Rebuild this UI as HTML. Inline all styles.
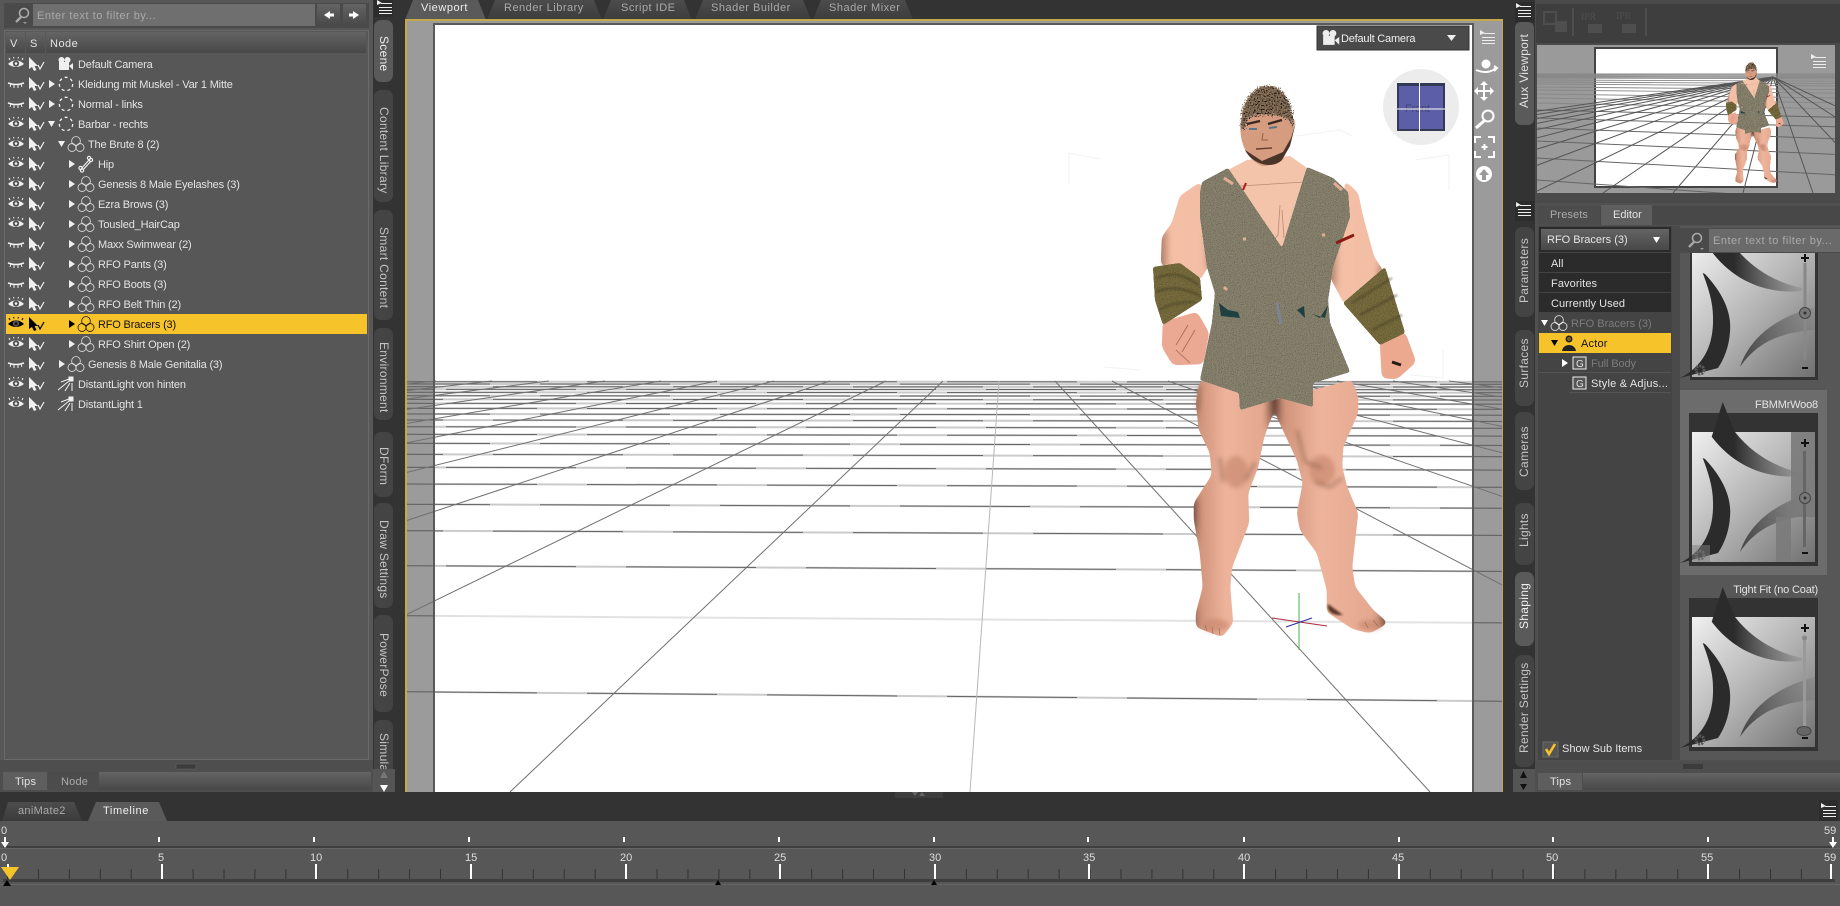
<!DOCTYPE html>
<html><head><meta charset="utf-8"><style>
html,body{margin:0;padding:0;background:#333;overflow:hidden}
svg{display:block}
text{font-family:"Liberation Sans",sans-serif;font-size:11px;fill:#e4e4e4;letter-spacing:-.18px}
.d{fill:#aaa}.dd{fill:#7c7c7c}.t{font-size:12px;letter-spacing:.3px;fill:#c4c4c4}
.w{fill:#eee}.tl{font-size:11px;letter-spacing:0;fill:#ddd}
</style></head><body>
<svg xmlns="http://www.w3.org/2000/svg" width="1840" height="906" viewBox="0 0 1840 906">
<defs>
<linearGradient id="hd" x1="0" y1="0" x2="0" y2="1"><stop offset="0" stop-color="#646464"/><stop offset="1" stop-color="#484848"/></linearGradient>
<linearGradient id="tabg" x1="0" y1="0" x2="0" y2="1"><stop offset="0" stop-color="#4c4c4c"/><stop offset="1" stop-color="#3c3c3c"/></linearGradient>
<linearGradient id="leg" x1="0" y1="0" x2="1" y2="0"><stop offset="0" stop-color="#4a2c24"/><stop offset=".07" stop-color="#cf9379"/><stop offset=".4" stop-color="#eeb49c"/><stop offset=".88" stop-color="#e3a78e"/><stop offset="1" stop-color="#553328"/></linearGradient>
<linearGradient id="arm" x1="0" y1="0" x2="1" y2="0"><stop offset="0" stop-color="#a06c58"/><stop offset=".18" stop-color="#f4c0a6"/><stop offset=".85" stop-color="#f2bda4"/><stop offset="1" stop-color="#8a5a48"/></linearGradient>
<linearGradient id="pbg" x1="0" y1="0" x2="1" y2="1"><stop offset="0" stop-color="#f0f0f0"/><stop offset=".5" stop-color="#b4b4b4"/><stop offset="1" stop-color="#707070"/></linearGradient>
<linearGradient id="sw1" gradientUnits="userSpaceOnUse" x1="42" y1="0" x2="112" y2="0"><stop offset="0" stop-color="#2b2b2b"/><stop offset="1" stop-color="#2b2b2b" stop-opacity=".05"/></linearGradient>
<linearGradient id="sw2" gradientUnits="userSpaceOnUse" x1="48" y1="0" x2="123" y2="0"><stop offset="0" stop-color="#444"/><stop offset="1" stop-color="#555" stop-opacity=".12"/></linearGradient>
<filter id="cloth" x="-5%" y="-5%" width="110%" height="110%"><feGaussianBlur in="SourceGraphic" stdDeviation="1.4"/><feComponentTransfer result="s"><feFuncA type="linear" slope="14" intercept="-6"/></feComponentTransfer><feTurbulence type="fractalNoise" baseFrequency="1.1" numOctaves="2" seed="3"/><feColorMatrix values=".9 .9 0 0 -.05 .9 .9 0 0 -.05 .9 .9 0 0 -.05 0 0 0 0 1"/><feComposite in2="s" operator="in"/><feBlend in2="s" mode="multiply"/></filter>
<filter id="goo" x="-10%" y="-10%" width="120%" height="120%"><feGaussianBlur in="SourceGraphic" stdDeviation="3"/><feComponentTransfer><feFuncA type="linear" slope="14" intercept="-6"/></feComponentTransfer></filter>
<filter id="hair" x="-15%" y="-25%" width="130%" height="150%"><feTurbulence type="fractalNoise" baseFrequency=".75" numOctaves="2" seed="5" result="n"/><feDisplacementMap in="SourceGraphic" in2="n" scale="8" xChannelSelector="R" yChannelSelector="G" result="d"/><feColorMatrix in="n" values="2.4 2.4 0 0 -1.7 2.4 2.4 0 0 -1.7 2.4 2.4 0 0 -1.7 0 0 0 0 1" result="g"/><feComposite in="g" in2="d" operator="in" result="m"/><feBlend in="m" in2="d" mode="multiply"/></filter>
<filter id="bl"><feGaussianBlur stdDeviation="2.5"/></filter>
<filter id="bl2"><feGaussianBlur stdDeviation="1"/></filter>
<clipPath id="vc"><rect x="407" y="24" width="1095" height="768"/></clipPath>
<clipPath id="wc"><rect x="435" y="24" width="1037" height="768"/></clipPath>
<clipPath id="mc"><path d="M407,24H433V792H407ZM1474,24H1502V792H1474Z"/></clipPath>
<clipPath id="ac"><rect x="1537" y="45" width="298" height="148"/></clipPath>
<clipPath id="c1"><rect x="1680" y="253" width="160" height="130"/></clipPath>
<g id="eo"><path d="M0,0Q8,-7.5 16,0Q8,6 0,0Z" fill="currentColor"/><circle cx="8" cy="-.5" r="3.2" fill="#555"/><circle cx="8" cy="-.5" r="1.3" fill="currentColor"/><path d="M2,-4L1,-6M6,-5.5L5.5,-7M10,-5.5L10.5,-7M14,-4L15,-6" stroke="currentColor"/></g>
<g id="ec"><path d="M0,-1Q8,2 16,-1" fill="none" stroke="currentColor" stroke-width="1.6"/><path d="M3,0L2,3M6,1L6,4M10,1L10,4M13,0L14,3" stroke="currentColor"/></g>
<g id="cu"><path d="M0,-7L0,5L3,3L5,7L7.5,6L5.5,2L9,2Z" fill="currentColor"/><path d="M9,1L11,5L15,-2" fill="none" stroke="currentColor" stroke-width="1.2"/></g>
<path id="tr" d="M0,-4L6,0L0,4Z" fill="currentColor"/>
<path id="td" d="M0,-3L7,-3L3.5,3Z" fill="currentColor"/>
<circle id="gr" cx="7" cy="0" r="6.7" fill="none" stroke="currentColor" stroke-width="1.3" stroke-dasharray="3 3"/>
<g id="fi" fill="none" stroke="currentColor" stroke-width=".9" stroke-opacity=".8"><circle cx="8" cy="-3" r="4.4"/><circle cx="4" cy="3.5" r="4"/><circle cx="12" cy="3.5" r="4"/></g>
<g id="bo" fill="none" stroke="currentColor" stroke-width="1.2"><path d="M3,5L11,-4"/><circle cx="2.5" cy="4" r="1.6"/><circle cx="4" cy="6.5" r="1.6"/><circle cx="11" cy="-6" r="1.6"/><circle cx="13" cy="-4" r="1.6"/><path d="M5,6L13,-3" /></g>
<g id="li" stroke="currentColor" fill="none" stroke-width="1"><path d="M0,6L11,-3M3,-2L11,-5M7,7L12,-1M14,7L14,-1"/><rect x="11" y="-7" width="4" height="4" fill="currentColor"/></g>
<g id="ca" fill="currentColor"><circle cx="3.5" cy="-4" r="3"/><circle cx="9.5" cy="-4" r="3"/><rect x="1" y="-2" width="10" height="8"/><path d="M11,2L15,-1V6Z"/></g>
<g id="me" fill="#eee"><path d="M0,0L5,3L0,5Z"/><rect x="4" y="3" width="11" height="1"/><rect x="2" y="7" width="13" height="1"/><rect x="2" y="10" width="13" height="1"/><rect x="2" y="13" width="13" height="1"/></g>
<g id="se" fill="none" stroke="#a8a8a8" stroke-width="1.6"><circle cx="11" cy="-2" r="4.5"/><path d="M8,2L3,7" stroke-width="2.4"/></g>
<g id="pre">
<rect width="123" height="130" fill="url(#pbg)"/>
<path d="M19.7,4.7L30.7,-30L43,0C60,22 85,36 110,41L110,44C80,47 45,38 19.7,4.7Z" fill="url(#sw1)"/>
<path d="M10.7,26L13,27C30,45 40,65 38,85C37,100 32,112 26,121L-12,131C10,120 22,100 21,70C21,55 16,40 10.7,26Z" fill="#2b2b2b"/>
<path d="M48,120C58,90 85,70 123,60L123,83C90,85 65,95 48,120Z" fill="url(#sw2)"/>
<circle cx="8" cy="123" r="4" fill="none" stroke="#5a5a5a" stroke-width="3" stroke-dasharray="2 1"/>
</g>
<path id="h1" d="M407,381.700L1502,381.900M407,392.300L1502,392.800M407,408.300L1502,409.300M407,434.300L1502,436.100M407,484L1502,487.300M407,691.700L1502,701.200"/>
<path id="h2" d="M407,384L1502,384.300M407,395.700L1502,396.300M407,414L1502,415.200M407,443.300L1502,445.400M407,504.300L1502,508.200"/>
<path id="h3" d="M407,386.700L1502,387M407,399.300L1502,400M407,420L1502,421.400M407,454.300L1502,456.700M407,530.700L1502,535.400"/>
<path id="h4" d="M407,389.300L1502,389.700M407,403.300L1502,404.100M407,426.700L1502,428.300M407,467.300L1502,470.100M407,565.700L1502,571.400"/>
<g id="fig">
<g filter="url(#goo)">
<path d="M1200,380L1196,403L1199,430L1210,453L1212,475L1194,503L1194,520L1200,553L1203,587L1196,613L1196,627L1222,637L1233,623L1230,587L1232,567L1249,523L1248,493L1258,467L1264,437L1274,410L1274,398Z" fill="url(#leg)"/>
<path d="M1275,400L1277,417L1297,460L1303,483L1297,513L1300,530L1317,553L1327,590L1327,612L1353,629L1370,633L1388,623L1373,610L1355,587L1352,567L1358,513L1347,487L1342,467L1343,447L1358,413L1358,397L1352,380Z" fill="url(#leg)"/>
<path d="M1202,181L1180,196L1172,223L1162,237L1161,265L1200,280L1212,260L1212,240L1200,217Z" fill="url(#arm)"/>
<path d="M1343,179L1358,193L1363,217L1374,257L1384,272L1345,305L1330,277L1332,247L1350,217Z" fill="url(#arm)"/>
<path d="M1163,322L1197,312L1209,333L1203,364L1173,365L1162,347Z" fill="#eba893"/>
<path d="M1380,342L1405,332L1416,362L1397,379L1382,378Z" fill="#eda990"/>
</g>
<g fill="#c98a70" filter="url(#bl)" opacity=".7"><ellipse cx="1236" cy="472" rx="12" ry="16"/><ellipse cx="1322" cy="470" rx="13" ry="15"/><ellipse cx="1215" cy="625" rx="14" ry="6"/><ellipse cx="1370" cy="625" rx="12" ry="5"/></g>
<g fill="none" stroke="#7a5040" stroke-width="2" filter="url(#bl)" opacity=".7"><path d="M1220,458L1223,482M1255,462L1246,480M1297,430L1305,462L1322,468M1315,482L1330,487L1342,478M1200,385L1198,410"/></g>
<g fill="none" stroke="#a06a58" stroke-width=".7"><path d="M1205,625L1207,631M1212,627L1213,634M1219,628L1220,635M1365,622L1368,628M1373,620L1378,626"/></g>
<path d="M1328,604C1326,612 1334,616 1343,615Z" fill="#5a3628" filter="url(#bl2)"/>
<path d="M1195,330L1182,352M1188,325L1176,345M1176,350L1190,363" stroke="#a06a58" fill="none" stroke-width=".8"/><path d="M1392,362L1401,365" stroke="#2a1a14" stroke-width="3"/>
<path d="M1153,267L1180,263L1200,278L1202,300L1163,325L1155,300Z" fill="#7c7040" filter="url(#cloth)"/>
<path d="M1385,267L1405,333L1380,345L1343,303Z" fill="#7c7040" filter="url(#cloth)"/>
<g fill="none" stroke="#3e3920" stroke-width="1.6" opacity=".7" filter="url(#bl2)"><path d="M1157,278C1170,272 1185,274 1198,285M1156,292C1170,286 1185,288 1200,296M1160,310C1172,302 1188,302 1196,302M1352,303L1392,278M1360,315L1397,295M1372,330L1402,315"/></g>
<path d="M1247,160L1290,156L1310,170L1282,250L1228,170Z" fill="#f3c4aa"/>
<path d="M1280,205L1278,235L1274,240M1282,210L1284,238M1240,186L1305,182" stroke="#b88a74" fill="none" stroke-width=".8"/>
<path d="M1202,182L1215,175L1228,168L1282,248L1307,167L1333,178L1348,192L1350,217L1333,267L1328,300L1330,323L1350,372L1313,383L1313,407L1280,398L1240,410L1239,393L1200,380L1212,323L1215,293L1207,267L1200,217L1200,193Z" fill="#8c8671" filter="url(#cloth)"/>
<path d="M1219,303L1228,310L1238,312L1240,318L1221,316ZM1252,306L1253,314M1297,310L1304,306L1305,318ZM1312,314L1320,318L1328,305L1325,318Z" fill="#1f4040"/>
<path d="M1277,303L1281,324" stroke="#7d8594" stroke-width="3"/>
<path d="M1224,178L1233,184M1334,183L1342,190M1243,239L1246,239M1322,235L1325,235M1224,287L1227,290" stroke="#e2ad92" stroke-width="3"/>
<path d="M1241,120C1238,140 1246,160 1262,166C1278,167 1292,150 1295,122L1288,112L1248,112Z" fill="#d59c80"/>
<path d="M1245,150C1252,164 1272,170 1282,160L1290,146L1296,122L1291,138L1283,152L1262,161Z" fill="#4a3428"/>
<path d="M1241,128C1239,110 1247,95 1255,90C1262,84 1275,84 1282,91C1290,100 1294,112 1293,127L1288,120C1282,114 1254,112 1247,120L1245,130Z" fill="#8e745c" filter="url(#hair)"/>
<path d="M1247,124L1260,121M1268,124L1282,120" stroke="#3a2820" stroke-width="2.400"/>
<path d="M1249,129L1257,129M1269,128L1277,127" stroke="#5d7386" stroke-width="2"/>
<path d="M1263,133L1262,140L1268,140" fill="none" stroke="#94604c"/><path d="M1256,149L1272,148" stroke="#6a3a2e" stroke-width="1.400"/>
<path d="M1243,190L1246,183" stroke="#b01818" stroke-width="2"/><path d="M1336,243L1354,235" stroke="#8a1a14" stroke-width="3"/>
</g>
</defs>
<rect width="1840" height="906" fill="#333"/>

<!-- left panel -->
<rect x="0" y="0" width="373" height="792" fill="#575757"/>
<rect x="4" y="3" width="365" height="25" fill="#4a4a4a"/>
<use href="#se" x="13" y="15"/><path d="M23,22L27,22L25,24Z" fill="#999"/>
<rect x="33" y="4" width="282" height="22" fill="#6f6f6f"/>
<text x="37" y="19" class="d" style="letter-spacing:.5px">Enter text to filter by...</text>
<rect x="317" y="4" width="23" height="22" fill="url(#hd)"/><rect x="343" y="4" width="23" height="22" fill="url(#hd)"/>
<path d="M324,15L330,11V13.5H334V16.5H330V19Z" fill="#fff"/><path d="M359,15L353,11V13.5H349V16.5H353V19Z" fill="#fff"/>
<rect x="4.500" y="30.500" width="364" height="729" fill="#575757" stroke="#6a6a6a"/>
<rect x="6" y="32" width="19" height="21" fill="url(#hd)"/><rect x="26" y="32" width="19" height="21" fill="url(#hd)"/><rect x="46" y="32" width="320" height="21" fill="url(#hd)"/>
<text x="10" y="47" style="letter-spacing:.5px">V</text><text x="30" y="47">S</text><text x="50" y="47" style="letter-spacing:.5px">Node</text>
<rect x="6" y="314" width="361" height="20" fill="#f7c32b"/>

<g color="#f0f0f0">
<use href="#eo" x="8" y="64"/><use href="#cu" x="29" y="64"/><use href="#ca" x="58" y="64"/><text x="78" y="68">Default Camera</text>
<use href="#ec" x="8" y="84"/><use href="#cu" x="29" y="84"/><use href="#tr" x="49" y="84"/><use href="#gr" x="59" y="84"/><text x="78" y="88">Kleidung mit Muskel - Var 1 Mitte</text>
<use href="#ec" x="8" y="104"/><use href="#cu" x="29" y="104"/><use href="#tr" x="49" y="104"/><use href="#gr" x="59" y="104"/><text x="78" y="108">Normal - links</text>
<use href="#eo" x="8" y="124"/><use href="#cu" x="29" y="124"/><use href="#td" x="48" y="124"/><use href="#gr" x="59" y="124"/><text x="78" y="128">Barbar - rechts</text>
<use href="#eo" x="8" y="144"/><use href="#cu" x="29" y="144"/><use href="#td" x="58" y="144"/><use href="#fi" x="68" y="144"/><text x="88" y="148">The Brute 8 (2)</text>
<use href="#eo" x="8" y="164"/><use href="#cu" x="29" y="164"/><use href="#tr" x="69" y="164"/><use href="#bo" x="78" y="164"/><text x="98" y="168">Hip</text>
<use href="#eo" x="8" y="184"/><use href="#cu" x="29" y="184"/><use href="#tr" x="69" y="184"/><use href="#fi" x="78" y="184"/><text x="98" y="188">Genesis 8 Male Eyelashes (3)</text>
<use href="#eo" x="8" y="204"/><use href="#cu" x="29" y="204"/><use href="#tr" x="69" y="204"/><use href="#fi" x="78" y="204"/><text x="98" y="208">Ezra Brows (3)</text>
<use href="#eo" x="8" y="224"/><use href="#cu" x="29" y="224"/><use href="#tr" x="69" y="224"/><use href="#fi" x="78" y="224"/><text x="98" y="228">Tousled_HairCap</text>
<use href="#ec" x="8" y="244"/><use href="#cu" x="29" y="244"/><use href="#tr" x="69" y="244"/><use href="#fi" x="78" y="244"/><text x="98" y="248">Maxx Swimwear (2)</text>
<use href="#ec" x="8" y="264"/><use href="#cu" x="29" y="264"/><use href="#tr" x="69" y="264"/><use href="#fi" x="78" y="264"/><text x="98" y="268">RFO Pants (3)</text>
<use href="#ec" x="8" y="284"/><use href="#cu" x="29" y="284"/><use href="#tr" x="69" y="284"/><use href="#fi" x="78" y="284"/><text x="98" y="288">RFO Boots (3)</text>
<use href="#eo" x="8" y="304"/><use href="#cu" x="29" y="304"/><use href="#tr" x="69" y="304"/><use href="#fi" x="78" y="304"/><text x="98" y="308">RFO Belt Thin (2)</text>
<use href="#eo" x="8" y="344"/><use href="#cu" x="29" y="344"/><use href="#tr" x="69" y="344"/><use href="#fi" x="78" y="344"/><text x="98" y="348">RFO Shirt Open (2)</text>
<use href="#ec" x="8" y="364"/><use href="#cu" x="29" y="364"/><use href="#tr" x="59" y="364"/><use href="#fi" x="68" y="364"/><text x="88" y="368">Genesis 8 Male Genitalia (3)</text>
<use href="#eo" x="8" y="384"/><use href="#cu" x="29" y="384"/><use href="#li" x="58" y="384"/><text x="78" y="388">DistantLight von hinten</text>
<use href="#eo" x="8" y="404"/><use href="#cu" x="29" y="404"/><use href="#li" x="58" y="404"/><text x="78" y="408">DistantLight 1</text>
</g>
<g color="#000"><use href="#eo" x="8" y="324"/><use href="#cu" x="29" y="324"/><use href="#tr" x="69" y="324"/><use href="#fi" x="78" y="324"/><text x="98" y="328" style="fill:#111">RFO Bracers (3)</text></g>

<rect x="0" y="760" width="373" height="32" fill="#4e4e4e"/>
<rect x="176" y="764" width="20" height="5" fill="#3c3c3c" stroke="#666" stroke-width=".5"/>
<rect x="3" y="772" width="44" height="18" fill="#5e5e5e"/><rect x="48" y="772" width="50" height="18" fill="#4c4c4c"/><rect x="99" y="772" width="272" height="18" fill="url(#hd)"/>
<text x="15" y="785" style="letter-spacing:.2px">Tips</text><text x="61" y="785" class="d" style="letter-spacing:.2px">Node</text>

<!-- left tabs -->
<g fill="#444">
<rect x="374" y="90" width="19" height="112" rx="7"/><rect x="374" y="210" width="19" height="110" rx="7"/><rect x="374" y="328" width="19" height="92" rx="7"/><rect x="374" y="432" width="19" height="65" rx="7"/><rect x="374" y="503" width="19" height="105" rx="7"/><rect x="374" y="615" width="19" height="97" rx="7"/><rect x="374" y="720" width="19" height="60" rx="7"/>
</g>
<rect x="374" y="20" width="19" height="62" rx="7" fill="#5a5a5a"/>
<g>
<text class="t" transform="translate(380,36) rotate(90)" style="fill:#eee">Scene</text>
<text class="t" transform="translate(380,107) rotate(90)">Content Library</text>
<text class="t" transform="translate(380,227) rotate(90)">Smart Content</text>
<text class="t" transform="translate(380,342) rotate(90)">Environment</text>
<text class="t" transform="translate(380,447) rotate(90)">DForm</text>
<text class="t" transform="translate(380,520) rotate(90)">Draw Settings</text>
<text class="t" transform="translate(380,633) rotate(90)">PowerPose</text>
<text class="t" transform="translate(380,733) rotate(90)">Simulation</text>
</g>
<rect x="373" y="769" width="22" height="23" fill="#555"/>
<path d="M380,778L384,771L388,778Z" fill="#777"/><path d="M380,785L388,785L384,792Z" fill="#fff"/>
<rect x="374" y="0" width="19" height="17" fill="#2c2c2c"/><use href="#me" x="377" y="0"/>

<!-- top tabs -->
<path d="M405,20L413,0H478L486,20Z" fill="#5a5a5a"/>
<path d="M487,20L495,0H594L602,20ZM603,20L611,0H684L692,20ZM695,20L703,0H803L811,20ZM813,20L821,0H905L913,20Z" fill="url(#tabg)"/>
<text x="421" y="11" class="w" style="letter-spacing:.55px">Viewport</text>
<text x="504" y="11" class="d" style="letter-spacing:.5px">Render Library</text>
<text x="621" y="11" class="d" style="letter-spacing:.5px">Script IDE</text>
<text x="711" y="11" class="d" style="letter-spacing:.5px">Shader Builder</text>
<text x="829" y="11" class="d" style="letter-spacing:.5px">Shader Mixer</text>

<!-- viewport -->
<rect x="405" y="19" width="1098" height="773" fill="#c6a94c"/>
<rect x="407" y="21" width="1095" height="771" fill="#9b9b9b"/>
<rect x="433" y="23" width="1041" height="769" fill="#5a5a5a"/>
<rect x="435" y="25" width="1037" height="767" fill="#fff"/>
<g clip-path="url(#wc)" fill="none" stroke="#cbcbcb" stroke-width="2">
<use href="#h1"/><use href="#h2"/><use href="#h3"/><use href="#h4"/>
<path stroke="#e2e2e2" d="M407,615.700L1502,622.900"/>
</g>
<g clip-path="url(#wc)" fill="none" stroke="#666" stroke-width="1" stroke-dasharray="130 50">
<use href="#h1"/><use href="#h2" stroke-dashoffset="47"/><use href="#h3" stroke-dashoffset="94"/><use href="#h4" stroke-dashoffset="141"/>
</g>
<g clip-path="url(#mc)" fill="none" stroke="#5c5c5c" stroke-width="1">
<use href="#h1"/><use href="#h2"/><use href="#h3"/><use href="#h4"/><path d="M407,615.700L1502,622.900"/>
</g>
<g clip-path="url(#vc)">
<path fill="none" stroke="#707070" stroke-width="1" d="M436,381L-3652,792M492,381L-3192,792M549,381L-2724,792M605,381L-2265,792M661,381L-1805,792M717,381L-1345,792M774,381L-877,792M830,381L-417,792M886,381L42,792M943,381L510,792M1055,381L1430,792M1112,381L1898,792M1168,381L2358,792M1224,381L2817,792M1281,381L3285,792M1337,381L3745,792M1393,381L4205,792M1449,381L4665,792"/>
<path fill="none" stroke="#b8b8b8" stroke-width="1" d="M999,381L970,792"/>
</g>
<rect x="433" y="23" width="2" height="769" fill="#5a5a5a"/><rect x="1472" y="23" width="2" height="769" fill="#5a5a5a"/>
<path d="M1069,183V153L1100,159M1296,136L1340,130L1352,136M1415,160L1449,155V190M1104,367L1140,370M1410,375L1443,378V350" fill="none" stroke="#f2f2f2"/>
<use href="#fig"/>
<path d="M1299,593V650" stroke="#4caf50" stroke-width="1"/><path d="M1272,618L1327,626" stroke="#b02840"/><path d="M1286,627L1312,618" stroke="#2a2aa0"/>
<circle cx="1421" cy="107" r="38" fill="#ececec"/>
<rect x="1397" y="83" width="48" height="48" fill="#333a55"/><rect x="1399" y="86" width="44" height="43" fill="#5c5ea8"/>
<text x="1405" y="112" style="font-size:11px;fill:#45466f">Front</text>
<path d="M1397,109H1445M1419.500,83V131" stroke="#fff"/>
<rect x="1317" y="26" width="152" height="24" fill="#4a4a4a" stroke="#333"/>
<g transform="translate(1322,38) scale(1.15)" color="#eee"><use href="#ca"/></g>
<text x="1341" y="42" class="w" style="letter-spacing:-.2px">Default Camera</text><path d="M1447,35H1456L1451.500,41Z" fill="#eee"/>

<!-- viewport toolbar -->
<use href="#me" x="1480" y="30"/>
<g fill="none" stroke="#fff" stroke-width="2">
<circle cx="1486" cy="64" r="3.500" fill="#fff"/><path d="M1476,70C1484,73 1490,73 1496,68M1494,66L1497,68L1494,71"/>
<path d="M1484,84L1484,98M1477,91H1491" stroke-width="2"/>
<path d="M1484,81L1480,85H1488ZM1484,101L1480,97H1488ZM1474,91L1478,87V95ZM1494,91L1490,87V95Z" fill="#fff" stroke="none"/>
<circle cx="1488" cy="116" r="5.500"/><path d="M1484,121L1476,128" stroke-width="3"/>
<path d="M1475,143V137H1481M1488,137H1494V143M1494,151V157H1488M1481,157H1475V151"/><path d="M1484.500,144V150M1481.500,147H1487.500"/>
<circle cx="1484" cy="174" r="8" fill="#fff" stroke="none"/><path d="M1484,169L1479,175H1482V180H1486V175H1489Z" fill="#999" stroke="none"/>
</g>

<!-- right strip -->
<rect x="1503" y="0" width="337" height="792" fill="#333"/>
<rect x="1535" y="0" width="305" height="197" fill="#4a4a4a"/>
<rect x="1536" y="4" width="304" height="39" fill="#3e3e3e"/>
<g fill="none" stroke="#4e4e4e" stroke-width="2"><rect x="1544" y="12" width="12" height="12"/><rect x="1556" y="22" width="10" height="9" fill="#4e4e4e"/><path d="M1573,8V36M1646,8V36"/></g>
<g fill="#4e4e4e"><text x="1581" y="20" style="font-family:'Liberation Serif',serif;font-size:10px;fill:#4e4e4e">IPR</text><text x="1616" y="19" style="font-family:'Liberation Serif',serif;font-size:10px;fill:#4e4e4e">IPR</text><rect x="1588" y="24" width="14" height="9"/><rect x="1622" y="24" width="14" height="9"/></g>
<rect x="1537" y="45" width="298" height="148" fill="#9a9a9a"/>
<rect x="1594" y="47" width="184" height="141" fill="#444"/><rect x="1596" y="49" width="180" height="137" fill="#fff"/>
<g clip-path="url(#ac)" fill="none">
<path stroke="#888" stroke-width=".9" d="M1537,74L1835,74M1537,75L1835,75.200M1537,76L1835,76.400M1537,77L1835,77.600M1537,78L1835,78.800M1537,80L1835,81.200M1537,82L1835,83.600M1537,84L1835,86M1537,87L1835,89.600M1537,90L1835,93.200M1537,94L1835,98M1537,98L1835,102.800M1537,103L1835,108.800"/>
<path stroke="#666" stroke-width="1" d="M1537,110L1835,117.200M1537,118L1835,126.800M1537,128L1835,138.800M1537,141L1835,154.400M1537,158L1835,174.800M1537,180L1835,201.200"/>
<path stroke="#555" stroke-width="1" d="M1773,77L1743,193M1773,77L1673,193M1773,77L1603,193M1773,77L1533,193M1773,77L1463,193M1773,77L1393,193M1773,77L1323,193M1773,77L1253,193M1773,77L1183,193M1773,77L1113,193M1773,77L1043,193M1773,77L973,193M1773,77L1813,193M1773,77L1883,193M1773,77L1953,193M1773,77L2023,193"/>
</g>
<use href="#fig" transform="translate(1472.300,43.700) scale(.22)"/>
<use href="#me" x="1811" y="54"/>
<rect x="1515" y="22" width="19" height="103" rx="6" fill="#5a5a5a"/>
<text class="t" transform="translate(1528,108) rotate(-90)" style="fill:#e0e0e0">Aux Viewport</text>
<rect x="1515" y="2" width="19" height="20" fill="#2c2c2c"/><use href="#me" x="1516" y="3"/>
<rect x="1535" y="196" width="305" height="8" fill="#4a4a4a"/>

<!-- bottom right panel -->
<rect x="1535" y="203" width="305" height="589" fill="#505050"/>
<rect x="1515" y="201" width="19" height="20" fill="#2c2c2c"/><use href="#me" x="1516" y="202"/>
<g fill="#444">
<rect x="1515" y="227" width="19" height="90" rx="7"/><rect x="1515" y="330" width="19" height="76" rx="7"/><rect x="1515" y="412" width="19" height="78" rx="7"/><rect x="1515" y="503" width="19" height="62" rx="7"/><rect x="1515" y="655" width="19" height="112" rx="7"/>
</g>
<rect x="1515" y="572" width="19" height="74" rx="7" fill="#5a5a5a"/>
<text class="t" transform="translate(1528,303) rotate(-90)">Parameters</text>
<text class="t" transform="translate(1528,388) rotate(-90)">Surfaces</text>
<text class="t" transform="translate(1528,477) rotate(-90)">Cameras</text>
<text class="t" transform="translate(1528,547) rotate(-90)">Lights</text>
<text class="t" transform="translate(1528,629) rotate(-90)" style="fill:#eee">Shaping</text>
<text class="t" transform="translate(1528,753) rotate(-90)">Render Settings</text>

<rect x="1538" y="206" width="302" height="19" fill="#484848"/>
<rect x="1538" y="206" width="62" height="19" fill="#4c4c4c"/><rect x="1601" y="205" width="51" height="20" fill="#5e5e5e"/>
<text x="1550" y="218" class="d" style="letter-spacing:.1px">Presets</text><text x="1613" y="218" style="letter-spacing:0">Editor</text>
<rect x="1538" y="226" width="134" height="534" fill="#444"/>
<rect x="1539" y="227" width="132" height="25" fill="#2b2b2b"/>
<rect x="1541" y="229" width="128" height="21" fill="url(#hd)"/>
<text x="1547" y="243" style="letter-spacing:0">RFO Bracers (3)</text><path d="M1653,237H1660L1656.500,243Z" fill="#fff"/>
<rect x="1539" y="253" width="132" height="19" fill="#2b2b2b"/><rect x="1539" y="273" width="132" height="19" fill="#2b2b2b"/><rect x="1539" y="293" width="132" height="19" fill="#2b2b2b"/>
<text x="1551" y="267" style="letter-spacing:.1px">All</text><text x="1551" y="287" style="letter-spacing:.1px">Favorites</text><text x="1551" y="307" style="letter-spacing:.05px">Currently Used</text>
<rect x="1539" y="333" width="132" height="20" fill="#f7c32b"/>
<path d="M1539,372.500H1671M1569,392.500H1671" stroke="#555"/>
<g color="#fff"><use href="#td" x="1541" y="323"/><use href="#fi" x="1551" y="323"/></g>
<text x="1571" y="327" class="dd" style="letter-spacing:0">RFO Bracers (3)</text>
<g color="#000"><use href="#td" x="1551" y="343"/></g>
<circle cx="1569" cy="339" r="3.500" fill="#222"/><path d="M1562,351C1563,343 1575,343 1576,351Z" fill="#222"/><circle cx="1569" cy="339" r="2" fill="#7a5a20"/>
<text x="1581" y="347" style="fill:#111;letter-spacing:.2px">Actor</text>
<g color="#fff"><use href="#tr" x="1562" y="363"/></g>
<rect x="1573" y="357" width="13" height="12" fill="#555" stroke="#eee"/><text x="1576" y="367" style="font-size:10px">G</text>
<rect x="1573" y="377" width="13" height="12" fill="#555" stroke="#eee"/><text x="1576" y="387" style="font-size:10px">G</text>
<text x="1591" y="367" class="dd" style="letter-spacing:-.1px">Full Body</text><text x="1591" y="387" style="letter-spacing:.2px">Style &amp; Adjus...</text>
<rect x="1543" y="742" width="15" height="15" fill="#555" stroke="#6a6a6a"/>
<path d="M1546,749L1549,754L1555,744" fill="none" stroke="#f7c32b" stroke-width="2.600"/>
<text x="1562" y="752" style="letter-spacing:0">Show Sub Items</text>

<rect x="1672" y="226" width="8" height="534" fill="#4a4a4a"/>
<rect x="1680" y="226" width="160" height="534" fill="#575757"/>
<rect x="1680" y="228" width="160" height="25" fill="#4a4a4a"/>
<use href="#se" x="1686" y="240"/><path d="M1700,248L1704,248L1702,250Z" fill="#999"/>
<rect x="1709" y="229" width="131" height="23" fill="#6a6a6a"/>
<text x="1713" y="244" class="d" style="letter-spacing:.5px">Enter text to filter by...</text>

<!-- cards -->
<g clip-path="url(#c1)">
<rect x="1690" y="240" width="128" height="140" fill="#333"/>
<use href="#pre" x="1692" y="247"/>
<rect x="1803.500" y="263" width="3" height="97" fill="#888"/><circle cx="1805" cy="313" r="5.500" fill="#777" stroke="#444"/><circle cx="1805" cy="313" r="1.500" fill="#333"/>
</g>
<path d="M1801,258H1809M1805,254V262" stroke="#111" stroke-width="2"/><path d="M1802,368H1808" stroke="#111" stroke-width="2"/>

<rect x="1680" y="390" width="147" height="185" fill="#6c6c6c"/>
<text x="1818" y="408" text-anchor="end">FBMMrWoo8</text>
<rect x="1689" y="413" width="129" height="153" fill="#333"/>
<use href="#pre" x="1692" y="432"/>
<path d="M1791,432H1815V517H1776V562H1791Z" fill="#7a7a7a" opacity=".9"/><rect x="1692" y="545" width="18" height="17" fill="#808080" opacity=".5"/>
<rect x="1803" y="451" width="3" height="96" fill="#666"/><circle cx="1805" cy="498" r="5.500" fill="#777" stroke="#444"/><circle cx="1805" cy="498" r="1.500" fill="#333"/>
<path d="M1801,443H1809M1805,439V447M1802,553H1808" stroke="#111" stroke-width="2"/>

<text x="1818" y="593" text-anchor="end">Tight Fit (no Coat)</text>
<rect x="1689" y="598" width="129" height="153" fill="#333"/>
<use href="#pre" x="1692" y="617"/>
<rect x="1803" y="638" width="3" height="94" fill="#999"/><circle cx="1804.500" cy="638" r="2.500" fill="#888"/>
<ellipse cx="1804" cy="731" rx="7" ry="4.500" fill="#666" stroke="#444"/>
<path d="M1801,628H1809M1805,624V632M1802,738H1808" stroke="#111" stroke-width="2"/>

<rect x="1535" y="761" width="305" height="31" fill="#4e4e4e"/>
<rect x="1683" y="764" width="20" height="5" fill="#3c3c3c"/>
<rect x="1513" y="769" width="22" height="23" fill="#555"/>
<path d="M1520,778L1523.500,771L1527,778Z" fill="#111"/><path d="M1520,784H1527L1523.500,790Z" fill="#111"/>
<rect x="1538" y="773" width="44" height="17" fill="#5e5e5e"/><rect x="1583" y="773" width="257" height="17" fill="url(#hd)"/>
<text x="1550" y="785" style="letter-spacing:.2px">Tips</text>

<!-- bottom -->
<rect x="0" y="792" width="1840" height="29" fill="#333"/>
<rect x="895" y="792" width="48" height="6" fill="#3e3e3e"/><path d="M912,792H918L915,796ZM919,796H925L922,792Z" fill="#666"/>
<path d="M2,821L8,802H74L82,821Z" fill="url(#tabg)"/><path d="M88,821L96,802H159L167,821Z" fill="#5a5a5a"/>
<text x="18" y="814" class="d" style="letter-spacing:.3px">aniMate2</text><text x="103" y="814" class="w" style="letter-spacing:.6px">Timeline</text>
<rect x="1819" y="800" width="19" height="21" fill="#2c2c2c"/><use href="#me" x="1821" y="803"/>
<rect x="0" y="821" width="1840" height="85" fill="#575757"/>
<rect x="3" y="846" width="1832" height="2" fill="#3e3e3e"/><path d="M0,848.500H1840" stroke="#666"/>
<rect x="3" y="879" width="1832" height="3" fill="#3e3e3e"/><path d="M0,884.500H1840" stroke="#666"/>
<path d="M7,874H1832" stroke="#333" stroke-width="10" stroke-dasharray="1 29.930"/>
<g fill="#fff"><rect x="158" y="837" width="2" height="5"/><rect x="313" y="837" width="2" height="5"/><rect x="468" y="837" width="2" height="5"/><rect x="623" y="837" width="2" height="5"/><rect x="778" y="837" width="2" height="5"/><rect x="933" y="837" width="2" height="5"/><rect x="1087" y="837" width="2" height="5"/><rect x="1243" y="837" width="2" height="5"/><rect x="1398" y="837" width="2" height="5"/><rect x="1552" y="837" width="2" height="5"/><rect x="1707" y="837" width="2" height="5"/>
<path d="M4,837H6V842H9L5,848L1,842H4ZM1832,837H1834V842H1837L1833,848L1829,842H1832Z"/>
<rect x="161" y="864" width="2" height="15"/><rect x="315" y="864" width="2" height="15"/><rect x="470" y="864" width="2" height="15"/><rect x="625" y="864" width="2" height="15"/><rect x="779" y="864" width="2" height="15"/><rect x="934" y="864" width="2" height="15"/><rect x="1088" y="864" width="2" height="15"/><rect x="1243" y="864" width="2" height="15"/><rect x="1398" y="864" width="2" height="15"/><rect x="1552" y="864" width="2" height="15"/><rect x="1707" y="864" width="2" height="15"/><rect x="1830" y="864" width="2" height="15"/><rect x="7" y="864" width="2" height="5"/></g>
<text x="1" y="834" class="tl">0</text><text x="1824" y="834" class="tl">59</text>
<text x="1" y="861" class="tl">0</text><text x="158" y="861" class="tl">5</text><text x="310" y="861" class="tl">10</text><text x="465" y="861" class="tl">15</text><text x="620" y="861" class="tl">20</text><text x="774" y="861" class="tl">25</text><text x="929" y="861" class="tl">30</text><text x="1083" y="861" class="tl">35</text><text x="1238" y="861" class="tl">40</text><text x="1392" y="861" class="tl">45</text><text x="1546" y="861" class="tl">50</text><text x="1701" y="861" class="tl">55</text><text x="1824" y="861" class="tl">59</text>
<path d="M1,867H19L10,880Z" fill="#f7c32b"/>
<path d="M7,880L3,886H11ZM718,880L715,885H721ZM934,880L931,885H937Z" fill="#000"/>
</svg>
</body></html>
